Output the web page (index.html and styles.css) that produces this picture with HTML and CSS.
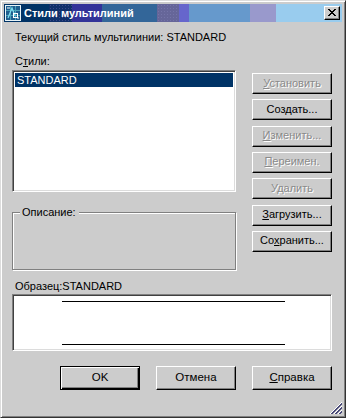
FILE: index.html
```html
<!DOCTYPE html>
<html lang="ru">
<head>
<meta charset="utf-8">
<title>Стили мультилиний</title>
<link rel="stylesheet" href="styles.css">
</head>
<body>
<div class="window">
  <div class="titlebar">
    <div class="tb-seg s1"></div><div class="tb-seg s2"></div><div class="tb-seg s3"></div><div class="tb-seg s4"></div><div class="tb-seg s5"></div><div class="tb-seg s6"></div><div class="tb-seg s7"></div><div class="tb-seg s8"></div><div class="tb-seg s9"></div>
    <div class="tb-content">
      <svg class="app-icon" width="16" height="16" viewBox="0 0 16 16">
        <rect x="0.5" y="0.5" width="15" height="15" fill="#1f5f8f" stroke="#e8f4f8"/>
        <path d="M1 5.5H15M1 10.5H15M5.5 1V15M10.5 1V15" stroke="#4aa0b8" stroke-width="1"/>
        <path d="M3 13L7 3L10 11" stroke="#7fe0f0" stroke-width="1.2" fill="none"/>
        <rect x="8.5" y="8.5" width="4" height="4" fill="none" stroke="#ffffff"/>
        <path d="M2 3H5M12 13H14" stroke="#ffffff"/>
      </svg>
      <span class="title-text">Стили мультилиний</span>
      <div class="close-btn"><svg width="8" height="7" viewBox="0 0 8 7"><path d="M0 0h2v1h1v1h2V1h1V0h2v1H7v1H6v1H5v1h1v1h1v1h1v1H6V6H5V5H3v1H2v1H0V6h1V5h1V4h1V3H2V2H1V1H0z" fill="#000"/></svg></div>
    </div>
  </div>

  <div class="client">
    <div class="current">Текущий стиль мультилинии: STANDARD</div>
    <div class="main">
      <div class="left-col">
        <div class="label">С<u>т</u>или:</div>
        <div class="listbox">
          <div class="list-item selected">STANDARD</div>
        </div>
        <div class="groupbox">
          <span class="group-label">Описание:</span>
        </div>
      </div>
      <div class="right-col">
        <div class="btn disabled"><span><u>У</u>становить</span></div>
        <div class="btn"><span>Соз<u>д</u>ать...</span></div>
        <div class="btn disabled"><span><u>И</u>зменить...</span></div>
        <div class="btn disabled"><span><u>П</u>ереимен.</span></div>
        <div class="btn disabled"><span>У<u>д</u>алить</span></div>
        <div class="btn"><span><u>З</u>агрузить...</span></div>
        <div class="btn"><span>Со<u>х</u>ранить...</span></div>
      </div>
    </div>
    <div class="label sample-label">Образец:STANDARD</div>
    <div class="sample">
      <div class="sample-line"></div>
      <div class="sample-line"></div>
    </div>
    <div class="bottom-row">
      <div class="btn big default"><span>OK</span></div>
      <div class="btn big"><span>Отмена</span></div>
      <div class="btn big"><span><u>С</u>правка</span></div>
    </div>
  </div>
  <div class="grip">
    <svg width="13" height="13" viewBox="0 0 13 13" shape-rendering="crispEdges">
      <path d="M12 0L0 12M12 4L4 12M12 8L8 12" stroke="#ffffff" stroke-width="1"/>
      <path d="M12 1L1 12M12 2L2 12M12 5L5 12M12 6L6 12M12 9L9 12M12 10L10 12" stroke="#4a4a78" stroke-width="1"/>
    </svg>
  </div>
</div>
</body>
</html>
```

FILE: styles.css
```css
* { box-sizing: border-box; }
html, body { margin: 0; padding: 0; }
body {
  width: 346px;
  height: 418px;
  background: #cccccc;
  font-family: "Liberation Sans", Arial, sans-serif;
  font-size: 11px;
  line-height: 13px;
  color: #000;
}
.window {
  position: relative;
  width: 346px;
  height: 418px;
  background: #cccccc;
  border-top: 1px solid #dcdcdc;
  border-left: 1px solid #dcdcdc;
  border-right: 1px solid #333333;
  border-bottom: 1px solid #333333;
  box-shadow: inset 1px 1px 0 #ffffff, inset -1px -1px 0 #808080;
  padding: 3px 3px 3px 3px;
}
.titlebar {
  position: relative;
  height: 18px;
  display: flex;
}
.tb-seg { height: 18px; }
.s1 { width: 45px; background: #003366; }
.s2 { width: 23px; background: #10306a radial-gradient(circle, #3a4a8a 0.6px, transparent 0.8px) 0 0 / 3px 3px; }
.s3 { width: 30px; background: #333399; }
.s4 { width: 55px; background: #336699; }
.s5 { width: 22px; background: #666699 radial-gradient(circle, #7474a8 0.6px, transparent 0.8px) 0 0 / 3px 3px; }
.s6 { width: 10px; background: #6666cc; }
.s7 { width: 61px; background: #6699cc; }
.s8 { width: 26px; background: #9999cc; }
.s9 { flex: 1; background: #99ccee; }
.tb-content {
  position: absolute;
  inset: 0;
  display: flex;
  align-items: center;
  padding-left: 1px;
}
.app-icon { display: block; flex: none; }
.title-text {
  margin-left: 3px;
  color: #ffffff;
  font-weight: bold;
  font-size: 11px;
}
.close-btn {
  margin-left: auto;
  margin-right: 2px;
  width: 16px;
  height: 14px;
  background: #cccccc;
  border-top: 1px solid #ffffff;
  border-left: 1px solid #ffffff;
  border-right: 1px solid #000000;
  border-bottom: 1px solid #000000;
  box-shadow: inset -1px -1px 0 #808080;
  display: flex;
  align-items: center;
  justify-content: center;
  padding: 0 1px 1px 0;
}
.close-btn svg { display: block; }

.client {
  padding: 9px 8px 0 8px;
}
.current { padding-left: 3px; }
.main {
  display: flex;
  margin-top: 11px;
}
.left-col {
  width: 224px;
  display: flex;
  flex-direction: column;
}
.label { padding-left: 3px; }
.listbox {
  margin-top: 2px;
  height: 122px;
  background: #ffffff;
  border-top: 1px solid #808080;
  border-left: 1px solid #808080;
  border-right: 1px solid #ffffff;
  border-bottom: 1px solid #ffffff;
  box-shadow: inset 1px 1px 0 #404040, inset -1px -1px 0 #dcdcdc;
  padding: 2px;
}
.list-item {
  height: 14px;
  line-height: 14px;
  padding-left: 2px;
}
.list-item.selected { background: #003366; color: #ffffff; }
.groupbox {
  position: relative;
  margin-top: 20px;
  height: 58px;
  border: 1px solid #808080;
  box-shadow: inset 1px 1px 0 #ffffff, 1px 1px 0 #ffffff;
}
.group-label {
  position: absolute;
  left: 7px;
  top: -7px;
  padding: 0 3px 0 2px;
  background: #cccccc;
}
.right-col {
  margin-left: 16px;
  padding-top: 18px;
  display: flex;
  flex-direction: column;
  gap: 5.33px;
}
.btn {
  width: 80px;
  height: 21px;
  background: #cccccc;
  border-top: 1px solid #ffffff;
  border-left: 1px solid #ffffff;
  border-right: 1px solid #000000;
  border-bottom: 1px solid #000000;
  box-shadow: inset -1px -1px 0 #808080;
  display: flex;
  align-items: center;
  justify-content: center;
  padding-bottom: 1px;
}
.btn.disabled { color: #8a8a8a; text-shadow: 1px 1px 0 #ffffff; }
.sample-label { margin-top: 10px; }
.sample {
  margin-top: 1px;
  width: 320px;
  height: 57px;
  background: #ffffff;
  border-top: 1px solid #808080;
  border-left: 1px solid #808080;
  border-right: 1px solid #ffffff;
  border-bottom: 1px solid #ffffff;
  box-shadow: inset 1px 1px 0 #404040, inset -1px -1px 0 #dcdcdc;
  display: flex;
  flex-direction: column;
  justify-content: space-between;
  padding: 6px 0 5px 49px;
}
.sample-line {
  width: 223px;
  height: 1px;
  background: #000000;
}
.bottom-row {
  display: flex;
  gap: 16px;
  margin-top: 15px;
  padding-left: 48px;
}
.btn.big { height: 24px; font-size: 11.5px; }
.btn.default {
  border: 1px solid #000000;
  box-shadow: inset 1px 1px 0 #ffffff, inset -1px -1px 0 #000000, inset -2px -2px 0 #808080;
}
.grip {
  position: absolute;
  right: 2px;
  bottom: 2px;
  width: 13px;
  height: 13px;
}
.grip svg { display: block; }
```
